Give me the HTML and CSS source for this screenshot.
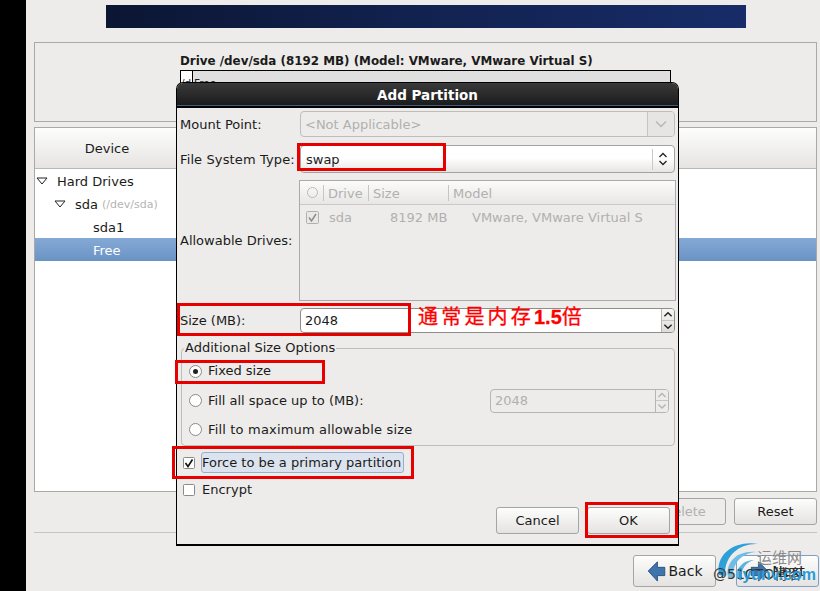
FILE: index.html
```html
<!DOCTYPE html>
<html lang="en">
<head>
<meta charset="utf-8">
<title>Add Partition</title>
<link rel="stylesheet" href="styles.css">
</head>
<body>
<div class="strip"></div>
<main class="main">
  <div class="banner"></div>
  <section class="panel drive-panel">
    <div class="drive-title">Drive /dev/sda (8192 MB) (Model: VMware, VMware Virtual S)</div>
    <div class="drive-bar"><span class="seg-used">/d</span><span class="seg-free">Free</span></div>
  </section>
  <section class="panel tree-panel">
    <div class="tree-head"><div class="col-device">Device</div></div>
    <div class="tree-row lvl0"><svg class="tri" viewBox="0 0 12 8"><path d="M1 1h10L6 7z" fill="#fff" stroke="#222"/></svg><span class="tx">Hard Drives</span></div>
    <div class="tree-row lvl1"><svg class="tri" viewBox="0 0 12 8"><path d="M1 1h10L6 7z" fill="#fff" stroke="#222"/></svg><span class="tx">sda</span><small>(/dev/sda)</small></div>
    <div class="tree-row lvl2"><span class="tx">sda1</span></div>
    <div class="tree-row lvl2 selected"><span class="tx">Free</span></div>
  </section>
  <div class="action-row">
    <button class="btn disabled del">Delete</button>
    <button class="btn reset">Reset</button>
  </div>
  <hr class="rule">
  <div class="nav-row">
    <button class="btn nav"><svg class="arrow" viewBox="0 0 20 24"><path d="M1 12 11 2v6h8v9h-8v6z" fill="#3f74ad" stroke="#25507f"/></svg>Back</button>
    <button class="btn nav next"><svg class="arrow" viewBox="0 0 20 24"><path d="M19 12 9 2v6H1v9h8v6z" fill="#3f74ad" stroke="#25507f"/></svg>Next</button>
  </div>
</main>

<div class="dialog">
  <div class="dialog-title">Add Partition</div>
  <div class="form">
    <div class="row mount">
      <label>Mount Point:</label>
      <div class="combo off"><span class="combo-text">&lt;Not Applicable&gt;</span><span class="combo-btn"><svg viewBox="0 0 12 8"><path d="M1 1.500 6 6.500 11 1.500" fill="none" stroke="#b5b5b5" stroke-width="1.300"/></svg></span></div>
    </div>
    <div class="row fs">
      <label class="wide">File System Type:</label>
      <div class="combo"><span class="combo-text">swap</span><span class="combo-sep"></span><svg class="updown" viewBox="0 0 10 16"><path d="M1.500 6 5 2.500 8.500 6M1.500 10 5 13.500 8.500 10" fill="none" stroke="#222" stroke-width="1.300"/></svg></div>
    </div>
    <div class="row drives">
      <label>Allowable Drives:</label>
      <div class="list">
        <div class="list-head">
          <span class="lh c0"><i class="circle"></i></span>
          <span class="lh c1">Drive</span>
          <span class="lh c2">Size</span>
          <span class="lh c3">Model</span>
        </div>
        <div class="list-row">
          <span class="lc c0"><svg class="mini-check" viewBox="0 0 13 13"><rect x=".5" y=".5" width="12" height="12" rx="1" fill="#e9e8e6" stroke="#b0b0b0"/><path d="M3 6.500 5.500 10 10 3" fill="none" stroke="#8c8c8c" stroke-width="1.500"/></svg></span>
          <span class="lc c1">sda</span>
          <span class="lc c2">8192 MB</span>
          <span class="lc c3">VMware, VMware Virtual S</span>
        </div>
      </div>
    </div>
    <div class="row size">
      <label>Size (MB):</label>
      <div class="spin"><span class="spin-text">2048</span><span class="spin-btns"><svg viewBox="0 0 10 6"><path d="M2 4.500 5 1.500 8 4.500" fill="none" stroke="#222" stroke-width="1.200"/></svg><svg viewBox="0 0 10 6"><path d="M2 1.500 5 4.500 8 1.500" fill="none" stroke="#222" stroke-width="1.200"/></svg></span></div>
    </div>
    <fieldset class="frame">
      <legend>Additional Size Options</legend>
      <div class="opt first"><i class="radio on"></i>Fixed size</div>
      <div class="opt second"><i class="radio"></i>Fill all space up to (MB):
        <div class="spin small off"><span class="spin-text">2048</span><span class="spin-btns"><svg viewBox="0 0 10 6"><path d="M2 4.500 5 1.500 8 4.500" fill="none" stroke="#b5b5b5" stroke-width="1.200"/></svg><svg viewBox="0 0 10 6"><path d="M2 1.500 5 4.500 8 1.500" fill="none" stroke="#b5b5b5" stroke-width="1.200"/></svg></span></div>
      </div>
      <div class="opt third"><i class="radio"></i>Fill to maximum allowable size</div>
    </fieldset>
    <div class="check-row force"><svg class="check" viewBox="0 0 12 12"><rect x=".5" y=".5" width="11" height="11" rx="1" fill="#fff" stroke="#8a8a8a"/><path d="M2.500 6 5 9.500 9.500 2.500" fill="none" stroke="#111" stroke-width="1.600"/></svg><span class="focus">Force to be a primary partition</span></div>
    <div class="check-row encrypt"><svg class="check" viewBox="0 0 12 12"><rect x=".5" y=".5" width="11" height="11" rx="1" fill="#fff" stroke="#8a8a8a"/></svg><span class="plain">Encrypt</span></div>
    <div class="dialog-btns">
      <button class="btn dlg">Cancel</button>
      <button class="btn dlg">OK</button>
    </div>
  </div>
</div>

<div class="mark m-fs"></div>
<div class="mark m-size"></div>
<div class="mark m-fixed"></div>
<div class="mark m-force"></div>
<div class="mark m-ok"></div>
<div class="note">通常是内存<b>1.5</b>倍</div>

<div class="wm">
  <svg class="wm-arcs" viewBox="0 0 60 50"><g fill="#2f9fd8"><path d="M3 32C-1 12 18-3 42 1 24 0 8 12 9 33Z"/><path d="M12 34C9 19 22 7 40 9 26 10 16 20 17 35Z" fill="#6fbde6"/><path d="M21 35C19 26 27 17 38 17 30 19 25 26 25 36Z" fill="#5db2e0"/></g></svg>
  <span class="wm-cn">运维网</span>
  <span class="wm-cto">@51CTO博客</span>
  <span class="wm-url">iyunv.com</span>
</div>
</body>
</html>
```
FILE: styles.css
```css
* { box-sizing: border-box; }
html, body { margin: 0; padding: 0; }
body {
  width: 820px; height: 591px; overflow: hidden; display: flex; position: relative;
  background: #edecea; color: #1b1b1b;
  font: 13px/16px "DejaVu Sans", sans-serif;
}
.strip { width: 26px; background: #000; flex: none; }
.main { flex: 1; display: flex; flex-direction: column; padding: 5px 3px 0 8px; }
.banner {
  width: 640px; height: 23px; margin-left: 72px;
  background: linear-gradient(90deg, #0b1633, #122250 50%, #172c68);
}
.panel { border: 1px solid #a9a9a6; }
.drive-panel { margin-top: 14px; height: 80px; padding: 11px 0 0 145px; }
.drive-title { font-weight: 700; font-size: 11.9px; line-height: 14px; white-space: nowrap; }
.drive-bar { display: flex; width: 491px; height: 30px; margin-top: 2px; border: 1px solid #000; border-bottom: 0; font-size: 10.500px; line-height: 25px; background: #dfdfdf; overflow: hidden; }
.seg-used { width: 12px; background: #fff; border-right: 1px solid #000; }
.seg-free { padding-left: 1px; }
.tree-panel { margin-top: 5px; height: 365px; background: #fff; }
.tree-head { height: 41px; background: linear-gradient(#fdfdfc, #e5e4e2); border-bottom: 1px solid #b8b8b6; }
.col-device { width: 144px; text-align: center; line-height: 42px; }
.tree-row { height: 23px; line-height: 23px; display: flex; align-items: center; white-space: pre; }
.tx { padding-top: 1px; }
.tri { width: 12px; height: 8px; margin-right: 9px; }
.lvl0 { padding-left: 1px; }
.lvl1 { padding-left: 19px; }
.lvl1 small { font-size: 11px; color: #b5b5b5; margin-left: 4px; padding-top: 2px; }
.lvl2 { padding-left: 58px; }
.selected { color: #fff; background: linear-gradient(#85a9d6, #6a93c4); }
.action-row { display: flex; justify-content: flex-end; gap: 8px; margin-top: 6px; }
.btn {
  font: 13px/16px "DejaVu Sans", sans-serif; color: #1b1b1b;
  border: 1px solid #a5a5a3; border-radius: 3px; background: linear-gradient(#fdfdfc, #e4e3e1);
  padding: 0; display: flex; align-items: center; justify-content: center;
}
.del { width: 83px; height: 27px; }
.reset { width: 83px; height: 27px; }
.disabled { color: #b0b0b0; background: #edecea; }
.rule { width: 100%; height: 1px; margin: 7px 0 0; border: 0; background: #c5c5c3; }
.nav-row { display: flex; justify-content: flex-end; gap: 20px; margin: 22px -2px 0 0; }
.nav { width: 83px; height: 32px; font-size: 14px; }
.next { border-color: #7f9fc4; }
.arrow { width: 19px; height: 22px; margin-right: 3px; }

.dialog {
  position: absolute; left: 176px; top: 82px; width: 503px; height: 464px;
  background: #edecea; border: 1px solid #000; border-bottom-width: 2px; border-radius: 7px 7px 0 0; overflow: hidden;
}
.dialog-title {
  height: 25px; background: linear-gradient(#3a3a3a, #1a1a1a); border-bottom: 2px solid #000;
  box-shadow: inset 0 -1px 0 #3f5f80;
  color: #fff; font-weight: 700; font-size: 13.500px; text-align: center; line-height: 25px;
}
.form { padding-left: 3px; }
.row { display: flex; align-items: center; }
.row label { width: 120px; flex: none; }
.mount label, .fs label { padding-top: 1px; }
.wide { letter-spacing: .12px; }
.mount { margin-top: 3px; height: 26px; }
.fs { margin-top: 8px; height: 28px; }
.drives { margin-top: 7px; height: 121px; }
.size { margin-top: 7px; height: 25px; }
.combo {
  width: 375px; height: 100%; display: flex; align-items: center;
  border: 1px solid #a2a2a0; border-radius: 4px; background: linear-gradient(#fff 45%, #e6e5e3);
}
.combo.off { background: #edecea; color: #b0b0b0; border-color: #bdbdbb; }
.combo-text { flex: 1; padding: 1px 0 0 5px; }
.off .combo-text { padding-left: 4px; }
.combo-btn { width: 27px; height: 100%; border-left: 1px solid #c5c5c3; background: #e6e5e3; border-radius: 0 3px 3px 0; display: flex; align-items: center; justify-content: center; }
.combo-btn svg { width: 12px; height: 8px; }
.combo-sep { width: 1px; height: 21px; background: #c9c9c7; }
.updown { width: 10px; height: 16px; margin: 0 6px 0 5px; }
.list { width: 377px; height: 100%; margin-left: -1px; border: 1px solid #aaa; color: #b0b0b0; }
.list-head { display: flex; height: 24px; align-items: center; background: linear-gradient(#fbfbfa, #e8e7e5); border-bottom: 1px solid #c9c9c7; }
.lh { height: 16px; line-height: 18px; border-right: 1px solid #c5c5c3; }
.lh:last-child { border: 0; }
.c0 { width: 24px; flex: none; padding-left: 7px; display: flex; align-items: center; }
.c1 { width: 45px; flex: none; padding-left: 4px; }
.c2 { width: 80px; flex: none; padding-left: 4px; }
.c3 { flex: 1; padding-left: 4px; }
.circle { width: 11px; height: 11px; border: 1px solid #bbb; border-radius: 50%; }
.list-row { display: flex; height: 24px; align-items: center; white-space: nowrap; padding-top: 2px; }
.list-row .c0 { padding-left: 6px; }
.list-row .c1 { width: 66px; padding-left: 5px; }
.list-row .c2 { width: 82px; padding-left: 0; }
.list-row .c3 { padding-left: 0; }
.mini-check { width: 13px; height: 13px; margin-top: -1px; }
.spin { width: 375px; height: 100%; display: flex; border: 1px solid #8d8d8b; border-radius: 4px; background: #fff; overflow: hidden; }
.spin-text { flex: 1; padding-left: 4px; line-height: 23px; }
.spin-btns { width: 13px; border-left: 1px solid #b5b5b3; display: flex; flex-direction: column; background: linear-gradient(#f6f6f5, #dddcda); }
.spin-btns svg { flex: 1; width: 100%; min-height: 0; }
.spin-btns svg + svg { border-top: 1px solid #c5c5c3; }
.spin.small { position: absolute; right: 5px; top: 50%; transform: translateY(-50%); width: 179px; height: 24px; background: #edecea; color: #b0b0b0; border-color: #b5b5b3; }
.spin.small .spin-text { line-height: 22px; }
.spin.small .spin-btns { background: #edecea; }
.frame {
  position: relative; width: 494px; height: 105px; margin: 8px 0 0 1px; padding: 0;
  border: 1px solid #bdbdbb; border-radius: 4px;
}
.frame legend { padding: 0 1px; margin-left: 2px; line-height: 14px; }
.opt { position: relative; display: flex; align-items: center; height: 29px; padding-left: 7px; }
.opt.first { margin-top: 5px; height: 22px; }
.opt.second { margin-top: 4px; }
.third { letter-spacing: .17px; }
.radio { width: 13px; height: 13px; border-radius: 50%; border: 1px solid #8a8a8a; background: #fff; margin-right: 6px; position: relative; }
.radio.on::after { content: ""; position: absolute; left: 3px; top: 3px; width: 5px; height: 5px; border-radius: 50%; background: #222; }
.first .radio { margin-top: 1px; }
.check-row { display: flex; align-items: center; height: 21px; padding-left: 3px; }
.force { margin-top: 6px; }
.encrypt { margin-top: 6px; }
.check { width: 12px; height: 12px; margin-right: 6px; flex: none; }
.focus { width: 203px; height: 21px; line-height: 19px; padding-left: 0; border: 1px solid #98aecb; border-radius: 3px; background: #dbe3ee; white-space: nowrap; }
.plain { padding-left: 1px; }
.dialog-btns { display: flex; justify-content: flex-end; gap: 8px; margin: 7px 8px 0 0; }
.dlg { width: 83px; height: 27px; }

.mark { position: absolute; border: 3px solid #e60000; }
.m-fs { left: 297px; top: 143px; width: 149px; height: 28px; }
.m-size { left: 177px; top: 303px; width: 234px; height: 33px; }
.m-fixed { left: 175px; top: 360px; width: 150px; height: 24px; }
.m-force { left: 172px; top: 446px; width: 242px; height: 33px; }
.m-ok { left: 585px; top: 502px; width: 93px; height: 36px; }
.note {
  position: absolute; left: 418px; top: 303px; height: 26px; color: #f00; white-space: nowrap;
  font: 20px/26px "Noto Sans CJK SC", sans-serif; letter-spacing: 3.200px; -webkit-text-stroke: .3px #f00;
}
.note b { font-family: "Liberation Sans", sans-serif; letter-spacing: 0; }

.wm { position: absolute; left: 0; top: 0; width: 820px; height: 591px; pointer-events: none; }
.wm-arcs { position: absolute; left: 716px; top: 543px; width: 60px; height: 50px; }
.wm-cn { position: absolute; left: 757px; top: 548px; font: 15px/17px "Noto Sans CJK SC", sans-serif; color: #8b8b8b; }
.wm-cto { position: absolute; left: 713px; top: 566px; font: 14px/16px "DejaVu Sans", "Noto Sans CJK SC", sans-serif; color: #333; white-space: nowrap; }
.wm-url { position: absolute; left: 738px; top: 566px; font: 700 16px/18px "Liberation Sans", sans-serif; color: #2b9bd6; }
```
